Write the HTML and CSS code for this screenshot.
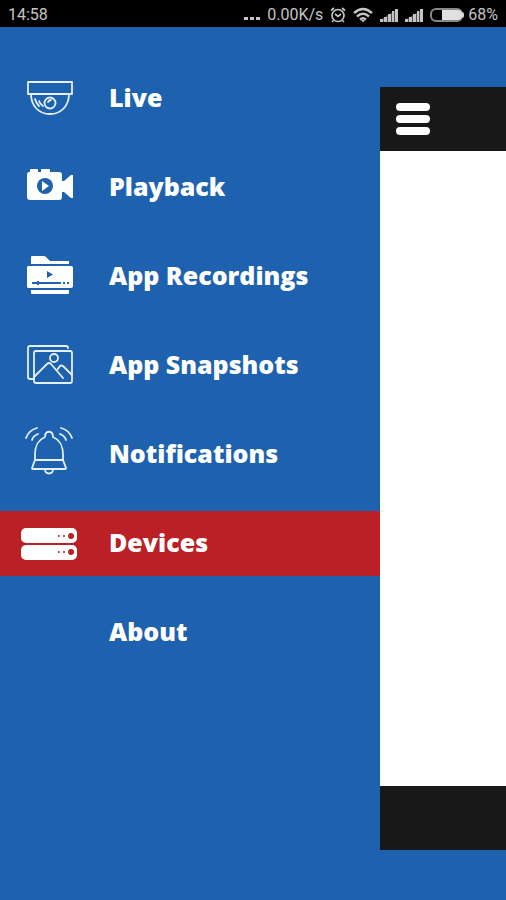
FILE: index.html
```html
<!DOCTYPE html>
<html lang="en">
  <head>
    <meta charset="UTF-8" />
    <meta name="viewport" content="width=device-width, initial-scale=1.0" />
    <title>Devices</title>
    <link rel="stylesheet" href="styles.css">
  </head>
  <body>
    <header class="status-bar">
      <span class="time">14:58</span>
      <div class="status-icons">
        <svg class="dots" width="16" height="14" viewBox="0 0 16 14">
          <path d="M0 9h4v3H0zM6 9h4v3H6zM12 9h4v3h-4z" fill="currentColor" />
        </svg>
        <span class="speed">0.00K/s</span>
        <svg class="alarm" width="16" height="16" viewBox="0 0 16 16" fill="none" stroke="currentColor" stroke-width="1.7">
          <circle cx="8" cy="8.5" r="6" />
          <path d="M5 7l3 2.5L11 7M1 3.5L4 1M15 3.5L12 1M3.5 13.5L2 15M12.5 13.5L14 15" />
        </svg>
        <svg class="wifi" width="20" height="16" viewBox="0 0 20 16" fill="none" stroke="currentColor" stroke-width="2.4">
          <path d="M1 6Q10-2 19 6M4 9.500Q10 4 16 9.500M7 12.500Q10 10 13 12.500" />
          <path d="M8 13h4l-2 2.500z" fill="currentColor" stroke="none" />
        </svg>
        <svg class="signal" width="18" height="14" viewBox="0 0 18 14">
          <path d="M0 14v-2L18 1v13z" fill="currentColor" opacity="0.4" />
          <path d="M0 11h3v3H0zM4 9h3v5H4zM8 6h3v8H8zM12 3h2v11h-2zM15 1h3v13h-3z" fill="currentColor" />
        </svg>
        <svg class="signal" width="18" height="14" viewBox="0 0 18 14">
          <path d="M0 14v-2L18 1v13z" fill="currentColor" opacity="0.4" />
          <path d="M0 11h3v3H0zM4 9h3v5H4zM8 6h3v8H8zM12 3h2v11h-2zM15 1h3v13h-3z" fill="currentColor" />
        </svg>
        <svg class="battery" width="34" height="14" viewBox="0 0 34 14">
          <rect x="1" y="1" width="31" height="12" rx="5" fill="none" stroke="#888" stroke-width="2" />
          <path d="M12 2h16q4 0 4 5t-4 5H12zM32 4q2 0 2 3t-2 3z" fill="#e0e0e0" />
        </svg>
        <span class="percent">68%</span>
      </div>
    </header>

    <div class="screen">
      <nav class="menu">
        <a class="menu-item" href="#live">
          <svg class="icon" viewBox="0 0 56 56">
            <path d="M7 11h44v12H7zM10 23c0 12 8 20 19 20s19-8 19-20" />
            <circle cx="29" cy="32" r="5.500" />
            <path d="M27 31q1-2 3-2M14 28q1 4 4 7M18 30q1 3 4 5" />
          </svg>
          <span class="label">Live</span>
        </a>
        <a class="menu-item" href="#playback">
          <svg class="icon solid" viewBox="0 0 56 56">
            <path d="M8 12h1v-2q0-1 1-1h6q1 0 1 1v2h3v-2q0-1 1-1h7q1 0 1 1v2h9q3 0 3 3v6h2l7-6h2v23h-2l-7-6h-2v5q0 3-3 3H9q-3 0-3-3V15q0-3 2-3z" />
            <circle class="hole" cx="24" cy="26" r="8" />
            <path d="M21 21l7 5-7 5z" />
          </svg>
          <span class="label">Playback</span>
        </a>
        <a class="menu-item" href="#recordings">
          <svg class="icon solid" viewBox="0 0 56 56">
            <path d="M10 15V8q0-1 1-1h12q1 0 2 1l4 4h19v3zM7 17h43q2 0 2 2v18q0 2-2 2H7q-1 0-1-2V19q0-2 1-2zM10 41h38v3q0 1-1 1H11q-1 0-1-1z" />
            <path class="hole" d="M26 22l6 3.500-6 3.500zM11 33h5v-1h2v1h22v2H18v1h-2v-1h-5zM42 33h2v2h-2zM46 33h2v2h-2z" />
          </svg>
          <span class="label">App Recordings</span>
        </a>
        <a class="menu-item" href="#snapshots">
          <svg class="icon" viewBox="0 0 56 56">
            <rect x="13" y="13" width="38" height="32" rx="2" />
            <path d="M13 41H9q-2 0-2-2V10q0-2 2-2h36q2 0 2 2" />
            <circle cx="33" cy="20" r="4" />
            <path d="M13 39l13-13q2-2 4 0l12 14M36 32l3-4q1-1 3 0l9 9" />
          </svg>
          <span class="label">App Snapshots</span>
        </a>
        <a class="menu-item" href="#notifications">
          <svg class="icon" viewBox="0 0 56 56">
            <path d="M14 33V28c0-10 3-15 10-18 0-7 8-7 8 0 7 3 10 8 10 18v5M14 33h28l3 8q0 1-1 1H12q-1 0-1-1zM24 42c0 6 8 6 8 0" />
            <path d="M5 11Q8 3 16 1M11 13Q12 9 17 7M51 11Q48 3 40 1M45 13Q44 9 39 7" />
          </svg>
          <span class="label">Notifications</span>
        </a>
        <a class="menu-item active" href="#devices" aria-current="page">
          <svg class="icon solid" viewBox="0 0 56 56">
            <rect x="0" y="12" width="56" height="15" rx="5" />
            <rect x="0" y="29" width="56" height="15" rx="5" />
            <g class="hole">
              <circle cx="50" cy="20" r="3" /><circle cx="43" cy="20" r="1" /><circle cx="38" cy="20" r="1" />
              <circle cx="50" cy="36" r="3" /><circle cx="43" cy="36" r="1" /><circle cx="38" cy="36" r="1" />
            </g>
          </svg>
          <span class="label">Devices</span>
        </a>
        <a class="menu-item" href="#about">
          <span class="icon"></span>
          <span class="label">About</span>
        </a>
      </nav>

      <main class="page">
        <div class="page-top">
          <button class="menu-button" type="button" aria-label="Menu">
            <span class="bar"></span>
            <span class="bar"></span>
            <span class="bar"></span>
          </button>
        </div>
        <div class="page-content"></div>
        <div class="page-bottom"></div>
      </main>
    </div>
  </body>
</html>
```
FILE: styles.css
```css
* {
  box-sizing: border-box;
}
body {
  margin: 0;
  min-height: 100vh;
  display: flex;
  flex-direction: column;
  background-color: #1e62af;
  color: #fff;
  font-family: "Open Sans", sans-serif;
}
.status-bar {
  display: flex;
  justify-content: space-between;
  align-items: center;
  height: 27px;
  padding: 3px 8px 0;
  background-color: #000;
  color: #c4c4c4;
  font-family: Roboto, sans-serif;
  font-size: 16px;
  line-height: 24px;
}
.status-icons {
  display: flex;
  align-items: center;
  gap: 7px;
}
.battery {
  margin-right: -3px;
}
.screen {
  flex: 1;
  display: flex;
}
.menu {
  flex: 0 0 75%;
  display: flex;
  flex-direction: column;
  gap: 24px;
  padding-top: 39px;
}
.menu-item {
  display: flex;
  align-items: center;
  gap: 32px;
  height: 65px;
  padding-left: 21px;
  color: #fff;
  font-size: 25px;
  font-weight: 800;
  line-height: 32px;
  text-decoration: none;
  white-space: nowrap;
}
.menu-item.active {
  background-color: #ba2025;
}
.label {
  padding-bottom: 3px;
}
.icon {
  flex: none;
  width: 56px;
  height: 56px;
  fill: none;
  stroke: #e4f0ff;
  stroke-width: 1.8;
  stroke-linecap: round;
  stroke-linejoin: round;
}
.icon.solid {
  fill: #fff;
  stroke: none;
}
.icon .hole {
  fill: #1e62af;
}
.active .hole {
  fill: #ba2025;
}
.page {
  flex: 1;
  display: flex;
  flex-direction: column;
  margin: 60px 0 50px;
  background-color: #fff;
}
.page-top,
.page-bottom {
  height: 64px;
  background-color: #181818;
}
.page-top {
  display: flex;
  align-items: center;
  padding-left: 16px;
}
.page-content {
  flex: 1;
}
.menu-button {
  display: flex;
  flex-direction: column;
  gap: 4px;
  padding: 0;
  border: 0;
  background: none;
  cursor: pointer;
}
.bar {
  width: 34px;
  height: 8px;
  border-radius: 4px;
  background-color: #fff;
}
```
